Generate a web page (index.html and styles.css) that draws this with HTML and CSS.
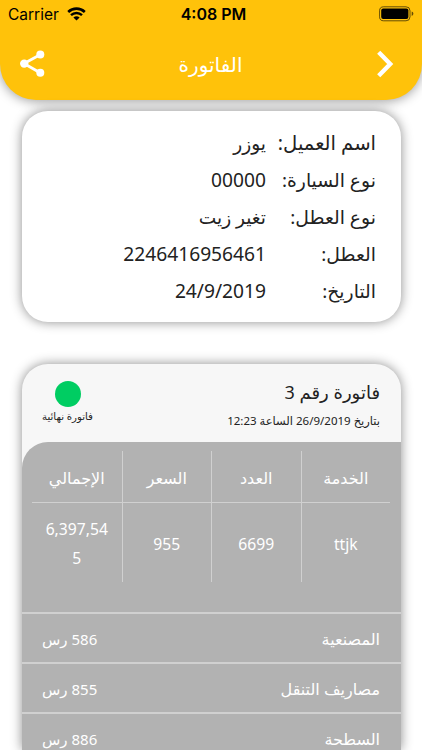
FILE: index.html
```html
<!DOCTYPE html>
<html lang="ar" dir="rtl">
<head>
    <meta charset="UTF-8">
    <meta name="viewport" content="width=device-width, initial-scale=1.0">
    <title>الفاتورة</title>
    <link rel="stylesheet" href="styles.css">
</head>
<body>
    <header class="header">
        <div class="status-bar" dir="ltr">
            <div class="carrier">
                <span>Carrier</span>
                <svg class="wifi" width="19" height="14" viewBox="0 0 19 14">
                    <path d="M1.2 5A12 12 0 0 1 17.8 5" fill="none" stroke="#000" stroke-width="2.6"/>
                    <path d="M4 8.2A8 8 0 0 1 15 8.2" fill="none" stroke="#000" stroke-width="2.4"/>
                    <path d="M9.5 13.5L6.4 10.6A4.6 4.6 0 0 1 12.6 10.6Z"/>
                </svg>
            </div>
            <span class="clock">4:08 PM</span>
            <svg class="battery" width="35" height="16" viewBox="0 0 35 16">
                <rect x="0.6" y="0.8" width="30.4" height="14" rx="4" fill="none" stroke="#000" stroke-opacity="0.6"/>
                <rect x="2.2" y="2.5" width="27.2" height="10.6" rx="2"/>
                <path d="M32.7 5.6Q34.4 6.2 34.4 7.8T32.7 10Z" fill-opacity="0.6"/>
            </svg>
        </div>
        <div class="nav-bar">
            <svg width="18" height="28" viewBox="0 0 18 28">
                <path d="M2.7 2.3L14.2 14L2.7 25.7" fill="none" stroke="#fff" stroke-width="4.4"/>
            </svg>
            <h1>الفاتورة</h1>
            <svg width="25" height="28" viewBox="0 0 25 28">
                <path d="M20.5 4.5L4 13.5L20.5 23" fill="none" stroke="#fff" stroke-width="2.8"/>
                <g fill="#fff">
                    <circle cx="20.3" cy="4.5" r="4"/>
                    <circle cx="4.2" cy="13.6" r="4.2"/>
                    <circle cx="20.3" cy="22.8" r="4"/>
                </g>
            </svg>
        </div>
    </header>

    <main>
        <dl class="card details">
            <dt class="customer">اسم العميل:</dt>
            <dd>يوزر</dd>
            <dt>نوع السيارة:</dt>
            <dd class="num">00000</dd>
            <dt>نوع العطل:</dt>
            <dd>تغير زيت</dd>
            <dt>العطل:</dt>
            <dd class="num">2246416956461</dd>
            <dt>التاريخ:</dt>
            <dd class="num">24/9/2019</dd>
        </dl>

        <section class="card invoice">
            <div class="invoice-head">
                <div class="invoice-title">
                    <h2>فاتورة رقم 3</h2>
                    <p>بتاريخ 26/9/2019 الساعة 12:23</p>
                </div>
                <div class="state">
                    <span class="dot"></span>
                    <span class="state-text">فاتورة نهائية</span>
                </div>
            </div>

            <div class="invoice-body">
                <div class="services">
                    <div class="cell head">الخدمة</div>
                    <div class="cell head">العدد</div>
                    <div class="cell head">السعر</div>
                    <div class="cell head">الإجمالي</div>
                    <div class="cell">ttjk</div>
                    <div class="cell">6699</div>
                    <div class="cell">955</div>
                    <div class="cell">6,397,545</div>
                </div>
                <div class="cost">
                    <span>المصنعية</span>
                    <span class="amount">586 رس</span>
                </div>
                <div class="cost">
                    <span>مصاريف التنقل</span>
                    <span class="amount">855 رس</span>
                </div>
                <div class="cost">
                    <span>السطحة</span>
                    <span class="amount">886 رس</span>
                </div>
            </div>
        </section>
    </main>
</body>
</html>
```
FILE: styles.css
```css
* {
    box-sizing: border-box;
}

body {
    margin: 0;
    height: 750px;
    overflow: hidden;
    background: #fff;
    color: #222;
    font-family: "Noto Sans", "DejaVu Sans", sans-serif;
}

h1, h2, p, dl, dd {
    margin: 0;
    font-weight: normal;
}

/* Header */
.header {
    height: 100px;
    background: #ffc20a;
    border-radius: 0 0 36px 36px;
    box-shadow: 0 1px 12px rgba(0, 0, 0, 0.4);
}

.status-bar {
    display: grid;
    grid-template-columns: 1fr auto 1fr;
    align-items: center;
    height: 28px;
    padding: 0 8px;
    font-family: Inter, sans-serif;
    font-size: 15.5px;
    color: #000;
}

.carrier {
    display: flex;
    align-items: center;
    gap: 8px;
}

.clock {
    padding-left: 5px;
    font-weight: 600;
    font-size: 16px;
}

.battery {
    justify-self: end;
}

.nav-bar {
    display: flex;
    justify-content: space-between;
    align-items: center;
    height: 72px;
    padding: 0 28px 0 20px;
    color: #fff;
}

.nav-bar h1 {
    font-size: 20px;
}

/* Cards */
.card {
    margin: 0 21.5px;
    border-radius: 26px;
    box-shadow: 0 0 12px rgba(0, 0, 0, 0.45);
}

.details {
    display: grid;
    grid-template-columns: 110px 1fr;
    grid-auto-rows: 37px;
    align-items: center;
    margin-top: 11px;
    height: 211px;
    padding: 13px 24.5px 0;
    background: #fff;
    font-size: 18.6px;
    white-space: nowrap;
}

.details dt {
    font-size: 18.8px;
}

.details .customer {
    font-size: 19.6px;
}

.details .num {
    font-size: 19.2px;
}

/* Invoice runs off the bottom of the screen */
.invoice {
    margin-top: 42px;
    height: 386px;
    background: #f7f7f7;
    border-radius: 26px 26px 0 0;
    overflow: hidden;
}

.invoice-head {
    display: flex;
    justify-content: space-between;
    height: 78px;
    padding: 14px 20.5px 0;
}

.invoice-title h2 {
    font-size: 18px;
    line-height: 28px;
}

.invoice-title p {
    font-size: 11.5px;
    line-height: 29px;
}

.state {
    display: flex;
    flex-direction: column;
    align-items: center;
    padding-top: 3px;
}

.dot {
    width: 26px;
    height: 26px;
    border-radius: 50%;
    background: #00cd62;
}

.state-text {
    font-size: 10.2px;
    line-height: 18px;
}

.invoice-body {
    height: 308px;
    padding-top: 9px;
    background: #b2b2b2;
    border-top-left-radius: 26px;
    color: #fff;
    font-size: 16px;
    overflow: hidden;
}

.services {
    display: grid;
    grid-template-columns: repeat(4, 1fr);
    grid-template-rows: 52px 79px;
    height: 161px;
    margin: 0 10.5px;
}

.cell {
    display: flex;
    justify-content: center;
    align-items: center;
    padding: 3px 12px 0;
    border-left: 1px solid #d0d0d0;
    font-size: 15.7px;
    line-height: 29px;
    text-align: center;
    word-break: break-all;
}

.cell:nth-child(4n) {
    border-left: none;
}

.cell.head {
    border-bottom: 1px solid #d0d0d0;
    font-size: 16px;
}

.cost {
    display: flex;
    justify-content: space-between;
    align-items: center;
    height: 50px;
    padding: 2px 20.5px 0;
    border-top: 2px solid #d0d0d0;
}

.amount {
    font-size: 15px;
}
```
